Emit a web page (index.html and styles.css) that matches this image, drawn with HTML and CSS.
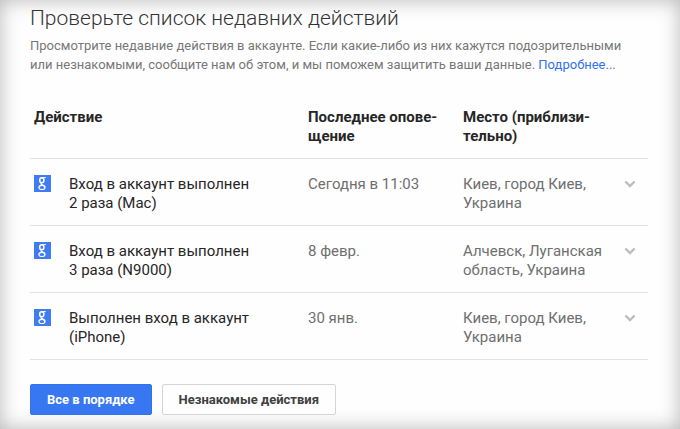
FILE: index.html
```html
<!DOCTYPE html>
<html lang="ru">
<head>
<meta charset="utf-8">
<meta name="viewport" content="width=device-width, initial-scale=1">
<title>Недавние действия</title>
<link rel="stylesheet" href="styles.css">
</head>
<body>
<svg class="sprite" aria-hidden="true">
  <symbol id="logo" viewBox="0 0 17 17">
    <rect width="17" height="17" fill="#3f7cf0"/>
    <g fill="none" stroke="#fff">
      <ellipse cx="7.8" cy="5.3" rx="2.1" ry="2.5" stroke-width="1.5"/>
      <path d="M8.2 2.6H11.8" stroke-width="1"/>
      <path d="M7.4 8C6.4 9 7.6 9.5 9 10.1Q11 11 10.9 12.4" stroke-width="1.4"/>
      <ellipse cx="7.9" cy="12.4" rx="3" ry="2.1" stroke-width="1.2"/>
    </g>
  </symbol>
  <symbol id="chevron" viewBox="0 0 12 8">
    <path d="M1.4 1.5L6 6L10.6 1.5" fill="none" stroke="#bdbdbd" stroke-width="2.4"/>
  </symbol>
</svg>
<main class="page">
  <h1 class="title">Проверьте список недавних действий</h1>
  <p class="intro">Просмотрите недавние действия в аккаунте. Если какие-либо из них кажутся подозрительными или&nbsp;незнакомыми, сообщите нам об этом, и мы поможем защитить ваши данные. <a class="link" href="#">Подробнее...</a></p>
  <table class="events">
    <colgroup><col class="col-icon"><col class="col-action"><col class="col-date"><col class="col-place"><col class="col-toggle"></colgroup>
    <thead>
      <tr><th colspan="2" scope="col">Действие</th><th scope="col">Последнее опове&shy;щение</th><th scope="col" colspan="2"><span class="place-head">Место (приблизи&shy;тельно)</span></th></tr>
    </thead>
    <tbody>
      <tr>
        <td><svg class="logo" aria-hidden="true"><use href="#logo"/></svg></td>
        <td class="action">Вход в аккаунт выполнен 2&nbsp;раза (Mac)</td>
        <td>Сегодня в 11:03</td>
        <td>Киев, город Киев, Украина</td>
        <td><button class="toggle" type="button" aria-label="Развернуть"><svg class="chevron" aria-hidden="true"><use href="#chevron"/></svg></button></td>
      </tr>
      <tr>
        <td><svg class="logo" aria-hidden="true"><use href="#logo"/></svg></td>
        <td class="action">Вход в аккаунт выполнен 3&nbsp;раза (N9000)</td>
        <td>8 февр.</td>
        <td>Алчевск, Луганская область, Украина</td>
        <td><button class="toggle" type="button" aria-label="Развернуть"><svg class="chevron" aria-hidden="true"><use href="#chevron"/></svg></button></td>
      </tr>
      <tr>
        <td><svg class="logo" aria-hidden="true"><use href="#logo"/></svg></td>
        <td class="action">Выполнен вход в аккаунт (iPhone)</td>
        <td>30 янв.</td>
        <td>Киев, город Киев, Украина</td>
        <td><button class="toggle" type="button" aria-label="Развернуть"><svg class="chevron" aria-hidden="true"><use href="#chevron"/></svg></button></td>
      </tr>
    </tbody>
  </table>
  <div class="buttons">
    <button class="button primary" type="button">Все в порядке</button>
    <button class="button" type="button">Незнакомые действия</button>
  </div>
</main>
</body>
</html>
```
FILE: styles.css
```css
* { box-sizing: border-box; }

body {
  margin: 0;
  background: #fefefe;
  color: #262626;
  font: 15px/19px Roboto, "Liberation Sans", sans-serif;
}

.sprite {
  position: absolute;
  width: 0;
  height: 0;
}

.page {
  min-height: 100vh;
  padding: 4px 32px 14px 30px;
  box-shadow: inset 0 0 20px rgba(0, 0, 0, 0.28);
}

.title {
  margin: 0;
  color: #333;
  font-size: 21px;
  font-weight: 300;
  line-height: 28px;
}

.intro {
  margin: 4px 0 0;
  color: #777;
  font-size: 13px;
}

.link {
  color: #3472ed;
  text-decoration: none;
}

.events {
  width: 100%;
  margin-top: 22px;
  border-collapse: collapse;
  table-layout: fixed;
}

.col-icon { width: 35px; }
.col-action { width: 239px; }
.col-date { width: 155px; }
.col-toggle { width: 36px; }

.events th,
.events td {
  padding: 12px 0 12px 4px;
  border-bottom: 1px solid #e2e2e2;
  text-align: left;
  vertical-align: top;
}

.events th { font-weight: 700; }
.events th:nth-child(2) { padding-right: 20px; }

.events td { padding-top: 16px; color: #6f6f6f; }
.events .action { padding-right: 50px; color: #262626; }

.place-head {
  display: block;
  max-width: 140px;
}

.logo {
  display: block;
  width: 17px;
  height: 17px;
}

.toggle {
  display: block;
  padding: 8px;
  margin: -3px 0 0 0;
  border: 0;
  background: none;
  cursor: pointer;
}

.chevron {
  display: block;
  width: 12px;
  height: 8px;
}

.buttons {
  display: flex;
  gap: 10px;
  margin-top: 24px;
}

.button {
  height: 31px;
  padding: 0 16px;
  border: 1px solid #d5d5d5;
  border-radius: 2px;
  background: #fefefe;
  color: #404040;
  font: 700 13px/19px Roboto, "Liberation Sans", sans-serif;
  cursor: pointer;
}

.primary {
  border-color: #3472ed;
  background: #3777f2;
  color: #fff;
}
```
